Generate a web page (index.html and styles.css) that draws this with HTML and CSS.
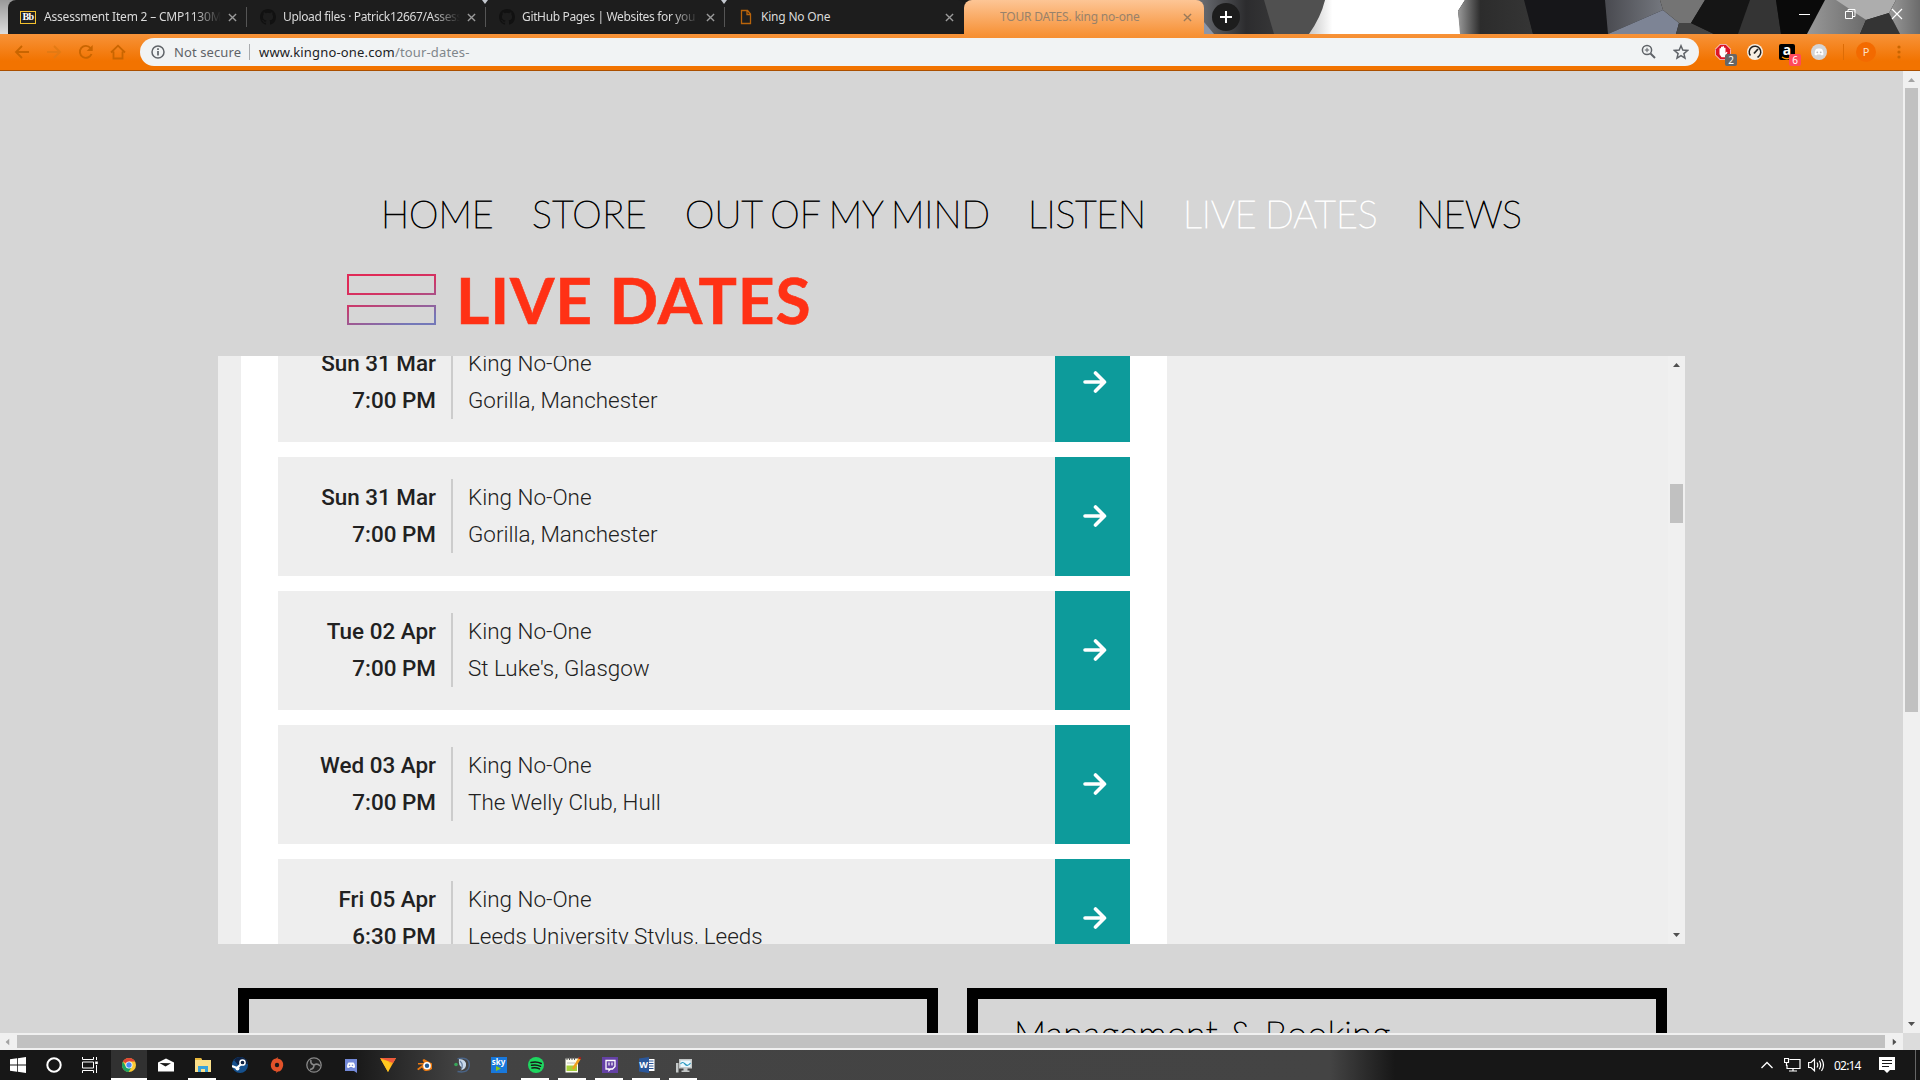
FILE: index.html
```html
<!DOCTYPE html>
<html lang="en">
<head>
<meta charset="utf-8">
<title>TOUR DATES. king no-one</title>
<link rel="stylesheet" href="styles.css">
</head>
<body>
<svg width="0" height="0" class="defs">
  <symbol id="close" viewBox="0 0 10 10"><path d="M1 1l8 8M9 1L1 9" stroke="currentColor" stroke-width="1.500"/></symbol>
  <symbol id="github" viewBox="0 0 16 16"><path d="M8 0C3.58 0 0 3.58 0 8c0 3.54 2.29 6.53 5.47 7.59.4.07.55-.17.55-.38v-1.49c-2.01.37-2.53-.49-2.69-.94-.09-.23-.48-.94-.82-1.13-.28-.15-.68-.52-.01-.53.63-.01 1.08.58 1.23.82.72 1.21 1.87.87 2.33.66.07-.52.28-.87.51-1.07-1.78-.2-3.64-.89-3.64-3.95 0-.87.31-1.59.82-2.15-.08-.2-.36-1.02.08-2.12 0 0 .67-.21 2.2.82a7.6 7.6 0 014 0c1.53-1.04 2.2-.82 2.2-.82.44 1.1.16 1.92.08 2.12.51.56.82 1.27.82 2.15 0 3.07-1.87 3.75-3.65 3.95.29.25.54.73.54 1.48v2.2c0 .21.15.46.55.38A8 8 0 0016 8c0-4.42-3.58-8-8-8z" fill="#111"/></symbol>
  <symbol id="arrow" viewBox="0 0 24 24"><path d="M2 12h19M12.500 3l9 9-9 9" fill="none" stroke="#fff" stroke-width="3.600" stroke-linecap="round" stroke-linejoin="round"/></symbol>
  <symbol id="tri" viewBox="0 0 7 4"><path d="M0 4L3.500 0 7 4z" fill="currentColor"/></symbol>
</svg>

<header class="tabstrip">
  <svg class="theme" width="1920" height="34" viewBox="0 0 1920 34">
    <defs>
      <linearGradient id="g1"><stop offset="0" stop-color="#777a80"/><stop offset=".4" stop-color="#2c2c2e"/><stop offset="1" stop-color="#484848"/></linearGradient>
      <linearGradient id="g2"><stop offset="0" stop-color="#c9c9c9"/><stop offset=".15" stop-color="#fff"/><stop offset="1" stop-color="#fff"/></linearGradient>
      <linearGradient id="g3"><stop offset="0" stop-color="#999"/><stop offset=".3" stop-color="#2c2c2c"/><stop offset="1" stop-color="#353535"/></linearGradient>
      <linearGradient id="g4"><stop offset="0" stop-color="#494a50"/><stop offset="1" stop-color="#74777e"/></linearGradient>
      <linearGradient id="g5"><stop offset="0" stop-color="#999"/><stop offset="1" stop-color="#6b6b6b"/></linearGradient>
      <linearGradient id="g6" x2="0" y2="1"><stop offset="0" stop-color="#999"/><stop offset="1" stop-color="#ddd"/></linearGradient>
    </defs>
    <path d="M0 0h1920v34H0z" fill="#1a1a1a"/>
    <path d="M0 0h26v27L8 34H0z" fill="url(#g6)"/>
    <path d="M1190 0h140v34h-140z" fill="url(#g1)"/>
    <path d="M1204 34V22l10 12z" fill="#8d96a8"/>
    <path d="M1264 0h60v34h-50z" fill="#505050"/>
    <path d="M1325 0h140l-7 11 3 23h-152q12-17 16-34z" fill="url(#g2)"/>
    <path d="M1465 0h60l8 34h-73l-2-23z" fill="url(#g3)"/>
    <path d="M1524 0h81l3 34h-75z" fill="#161619"/>
    <path d="M1605 0h55l3 10-55 24z" fill="url(#g4)"/>
    <path d="M1663 10l16 13-3 11h-68z" fill="#7d8495"/>
    <path d="M1660 0h45l-14 23h-12l-16-13z" fill="#747474"/>
    <path d="M1679 23h12l23 11h-38z" fill="#444"/>
    <path d="M1705 0h45l-12 34h-24l-23-11z" fill="#151515"/>
    <path d="M1750 0h26l5 34h-43z" fill="#343434"/>
    <path d="M1776 0h49l-18 34h-26z" fill="#0a0a0a"/>
    <path d="M1825 0h15l26 20-6 14h-53z" fill="url(#g5)"/>
    <path d="M1836 0h60l-7 13-23 7z" fill="#adadad"/>
    <path d="M1866 20l23-7 11 21h-40z" fill="#343434"/>
    <path d="M1896 0h24v34h-20l-11-21z" fill="url(#g5)"/>
  </svg>
  <div class="tabs">
    <div class="tab first">
      <span class="fav bb">Bb</span><span class="title faded">Assessment Item 2 – CMP1130M-</span><svg class="x"><use href="#close"/></svg>
    </div>
    <div class="tab">
      <svg class="fav"><use href="#github"/></svg><span class="title faded">Upload files · Patrick12667/Assess</span><svg class="x"><use href="#close"/></svg>
    </div>
    <div class="tab notch">
      <svg class="fav"><use href="#github"/></svg><span class="title faded">GitHub Pages | Websites for you a</span><svg class="x"><use href="#close"/></svg>
    </div>
    <div class="tab last notch">
      <svg class="fav" viewBox="0 0 16 16"><path d="M3.500 1.500h6l3 3.500v9.500h-9zM9 1.500V5.500h3.500" fill="none" stroke="#b9640b" stroke-width="1.300"/></svg><span class="title">King No One</span><svg class="x"><use href="#close"/></svg>
    </div>
    <div class="tab active">
      <span class="fav"></span><span class="title">TOUR DATES. king no-one</span><svg class="x"><use href="#close"/></svg>
    </div>
  </div>
  <div class="newtab"><svg width="14" height="14"><path d="M7 1v12M1 7h12" stroke="#fff" stroke-width="2"/></svg></div>
  <div class="winctl">
    <svg width="11" height="12"><path d="M0 6.500h11" stroke="#fff"/></svg>
    <svg width="11" height="12"><path d="M.5 3.500h7v7h-7zM3 3.500V1.500h7v7H7.500" fill="none" stroke="#fff"/></svg>
    <svg width="12" height="12"><path d="M1 1l10 10M11 1L1 11" stroke="#fff" stroke-width="1.200"/></svg>
  </div>
</header>

<div class="toolbar">
  <div class="navbtns">
    <svg viewBox="0 0 16 16"><path d="M15 8H2M8 2L2 8l6 6" fill="none" stroke="#c96500" stroke-width="1.800"/></svg>
    <svg viewBox="0 0 16 16"><path d="M1 8h13M8 2l6 6-6 6" fill="none" stroke="#e37a14" stroke-width="1.800"/></svg>
    <svg viewBox="0 0 16 16"><path d="M13.500 10A6 6 0 1 1 12.500 4" fill="none" stroke="#c96500" stroke-width="1.900"/><path d="M14.700 1v6h-6z" fill="#c96500"/></svg>
    <svg viewBox="0 0 16 16"><path d="M1 8.500L8 1.700l7 6.800M3.500 7.500v7h9v-7" fill="none" stroke="#c96500" stroke-width="1.800"/></svg>
  </div>
  <div class="omnibox">
    <svg width="14" height="14" viewBox="0 0 14 14"><circle cx="7" cy="7" r="6" fill="none" stroke="#5f6368" stroke-width="1.500"/><path d="M7 6v4.500M7 3.300v1.700" stroke="#5f6368" stroke-width="1.700"/></svg>
    <span class="secure">Not secure</span>
    <span class="url">www.kingno-one.com<i>/tour-dates-</i></span>
    <svg class="mag" width="15" height="15" viewBox="0 0 15 15"><g fill="none" stroke="#5f6368"><circle cx="6" cy="6" r="4.600" stroke-width="1.500"/><path d="M9.500 9.500l4.500 4.500" stroke-width="2"/><path d="M6 3.800v4.400M3.800 6h4.400"/></g></svg>
    <svg width="16" height="16" viewBox="0 0 16 16"><path d="M8 1.800l1.800 4.300 4.700.4-3.600 3.100 1.100 4.600L8 11.700l-4 2.500 1.100-4.600L1.500 6.500l4.700-.4z" fill="none" stroke="#5f6368" stroke-width="1.500"/></svg>
  </div>
  <div class="exts">
    <span class="ext"><svg viewBox="0 0 16 16"><path d="M5 0h6l5 5v6l-5 5H5l-5-5V5z" fill="#f3d6d6"/><path d="M5.300.8h5.400l4.500 4.500v5.400l-4.500 4.500H5.300L.8 10.700V5.300z" fill="#dd1626"/><path d="M4.500 7V4.500q.8-1 1.500 0V3q.8-1 1.500 0v-.5q.8-.8 1.500 0V4q.8-1 1.500 0v5l1-1.200 1 .5-2.500 5H6.500l-2-3z" fill="#fff"/></svg><b class="badge">2</b></span>
    <span class="ext"><svg viewBox="0 0 16 16"><circle cx="8" cy="8" r="8" fill="#f6eee4"/><circle cx="8" cy="8" r="5.800" fill="none" stroke="#222" stroke-width="1.500" stroke-dasharray="28 9" transform="rotate(142 8 8)"/><path d="M7 9.500L11 5" stroke="#222" stroke-width="1.800"/></svg></span>
    <span class="ext amz"><em>a</em><svg class="smile" viewBox="0 0 12 4"><path d="M1 1q5 3.500 10 0" fill="none" stroke="#f90" stroke-width="1.300"/></svg><b class="badge red">6</b></span>
    <span class="ext"><svg viewBox="0 0 16 16"><circle cx="8" cy="8" r="8" fill="#d4d4d4"/><path d="M3.500 10.500q0-4 1.500-5.500l2-.5h2l2 .5q1.500 1.500 1.500 5.500L11 11.500 9.500 10.500h-3L5 11.500z" fill="#fff"/><circle cx="6.300" cy="8.300" r=".9" fill="#bbb"/><circle cx="9.700" cy="8.300" r=".9" fill="#bbb"/></svg></span>
    <span class="vsep"></span>
    <span class="avatar">P</span>
    <svg class="dots" viewBox="0 0 4 14"><g fill="#c96500"><circle cx="2" cy="2" r="1.600"/><circle cx="2" cy="7" r="1.600"/><circle cx="2" cy="12" r="1.600"/></g></svg>
  </div>
</div>

<div class="viewport">
  <main class="page">
    <nav class="menu">
      <a class="m1">HOME</a><a class="m2">STORE</a><a class="m3">OUT OF MY MIND</a><a class="m4">LISTEN</a><a class="m5 current">LIVE DATES</a><a class="m6">NEWS</a>
    </nav>
    <div class="heading">
      <svg width="89" height="52" viewBox="0 0 89 52"><defs><linearGradient id="lg" gradientUnits="userSpaceOnUse" x1="40" y1="0" x2="55" y2="52"><stop offset="0" stop-color="#e02a57"/><stop offset=".35" stop-color="#d03566"/><stop offset="1" stop-color="#7478b8"/></linearGradient></defs><path d="M1 1h87v19H1zM1 32h87v18H1z" fill="none" stroke="url(#lg)" stroke-width="2"/></svg>
      <h1>LIVE DATES</h1>
    </div>
    <section class="widget">
      <div class="sheet">
        <article class="gig"><div class="when">Sun 31 Mar<br>7:00 PM</div><div class="what">King No-One<br>Gorilla, Manchester</div><div class="go"><svg><use href="#arrow"/></svg></div></article>
        <article class="gig"><div class="when">Sun 31 Mar<br>7:00 PM</div><div class="what">King No-One<br>Gorilla, Manchester</div><div class="go"><svg><use href="#arrow"/></svg></div></article>
        <article class="gig"><div class="when">Tue 02 Apr<br>7:00 PM</div><div class="what">King No-One<br>St Luke's, Glasgow</div><div class="go"><svg><use href="#arrow"/></svg></div></article>
        <article class="gig"><div class="when">Wed 03 Apr<br>7:00 PM</div><div class="what">King No-One<br>The Welly Club, Hull</div><div class="go"><svg><use href="#arrow"/></svg></div></article>
        <article class="gig"><div class="when">Fri 05 Apr<br>6:30 PM</div><div class="what">King No-One<br>Leeds University Stylus, Leeds</div><div class="go"><svg><use href="#arrow"/></svg></div></article>
      </div>
      <div class="vbar inner"><svg class="tri"><use href="#tri"/></svg><div class="thumb"></div><svg class="tri down"><use href="#tri"/></svg></div>
    </section>
    <div class="boxes">
      <div class="box"></div>
      <div class="box"><h2>Management &amp; Booking</h2></div>
    </div>
  </main>
  <div class="vbar outer"><svg class="tri"><use href="#tri"/></svg><div class="thumb"></div><svg class="tri down"><use href="#tri"/></svg></div>
</div>
<div class="hbar"><svg class="tri left"><use href="#tri"/></svg><div class="thumb"></div><svg class="tri right"><use href="#tri"/></svg><span class="corner"></span></div>

<footer class="taskbar">
  <div class="apps">
    <span class="app"><svg viewBox="0 0 16 16"><path d="M0 2.300L7 1.300V7.600H0zM7.800 1.200L16 0v7.600H7.800zM0 8.400h7v6.300l-7-1zM7.800 8.400H16V16l-8.200-1.200z" fill="#fff"/></svg></span>
    <span class="app"><svg viewBox="0 0 16 16"><circle cx="8" cy="8" r="6.700" fill="none" stroke="#fff" stroke-width="2"/></svg></span>
    <span class="app wide"><svg viewBox="0 0 16 16"><path d="M.5 0v2.500h11V0M.5 16v-2.500h11V16M.5 5h11v6H.5zM14.500 0v3M14.500 8v8" fill="none" stroke="#fff"/><path d="M13.200 4.500h2.600v2.600h-2.600z" fill="#fff"/></svg></span>
    <span class="app hot run"><svg viewBox="0 0 16 16"><circle cx="8" cy="8" r="7" fill="#fcc934"/><path d="M8 8L1.900 4.500A7 7 0 0 1 14.100 4.500H8z" fill="#e04436"/><path d="M1.900 4.500A7 7 0 0 0 7.500 15L11 9.700 8 8 5 9.700z" fill="#1da462"/><circle cx="8" cy="8" r="3.500" fill="#fff"/><circle cx="8" cy="8" r="2.700" fill="#4c8bf5"/></svg></span>
    <span class="app"><svg viewBox="0 0 16 16"><path d="M0 5.500L8 1.500l8 4V14.500H0z" fill="#fff"/><path d="M1.500 6l11.500.3L7.500 9.500z" fill="#181818"/></svg></span>
    <span class="app run"><svg viewBox="0 0 16 16"><path d="M0 1h6l1 2h9v12H0z" fill="#fbe08b"/><path d="M0 1h6l1 2H0z" fill="#e8b83c"/><path d="M3 15V9h10v6h-3v-3H6v3z" fill="#3aa3dc"/></svg></span>
    <span class="app"><svg viewBox="0 0 16 16"><circle cx="8" cy="8" r="8" fill="#15508d"/><path d="M2 3a8 8 0 0 1 14 4L6 8z" fill="#0c2144"/><circle cx="10.500" cy="5.500" r="2.600" fill="none" stroke="#fff" stroke-width="1.500"/><path d="M0 9l5 2 4-4" fill="none" stroke="#fff" stroke-width="2.200"/><circle cx="5.500" cy="11.500" r="2" fill="#fff"/></svg></span>
    <span class="app"><svg viewBox="0 0 16 16"><path d="M9 0l-.5 1.500Q14.500 2.500 14.200 8.500 13 14.500 9 14.500l-2 1.500.5-1.500Q1.500 13.500 1.800 7.500 3 1.500 7 1.500z" fill="#e1522a"/><circle cx="8" cy="8" r="2.200" fill="#181818"/></svg></span>
    <span class="app"><svg viewBox="0 0 16 16"><circle cx="8" cy="8" r="7.200" fill="#222" stroke="#888" stroke-width="1.300"/><path d="M8 8Q4 7 5 3M8 8q3.500-2 6 1M8 8q0 4-4 4.500" fill="none" stroke="#888" stroke-width="1.600"/></svg></span>
    <span class="app"><svg viewBox="0 0 16 16"><path d="M2 2h12v14l-3-2H2z" fill="#7389d8"/><path d="M4 10.500q0-4 1.500-5h5Q12 6.500 12 10.500l-2 .5-.8-1H6.800L6 11z" fill="#fff"/><circle cx="6.500" cy="8.300" r=".8" fill="#7389d8"/><circle cx="9.500" cy="8.300" r=".8" fill="#7389d8"/></svg></span>
    <span class="app"><svg viewBox="0 0 16 16"><path d="M0 1h16L8 15z" fill="#fdae1c"/><path d="M0 1h16l-3 5z" fill="#ee5a3c"/><path d="M1 2.500l7 1.800 3 4L8 15z" fill="#ffc820"/></svg></span>
    <span class="app"><svg viewBox="0 0 16 16"><path d="M0 12l6-4.500H1V6h6L5.500 3 7 2l8 4.500V12q-4 3-8 1.500L5 10.500l-3.500 2.700z" fill="#ea7a12"/><circle cx="10" cy="8.800" r="3.800" fill="#fff"/><circle cx="10" cy="8.800" r="2.200" fill="#235b91"/></svg></span>
    <span class="app"><svg viewBox="0 0 16 16"><path d="M3.500 1.800Q15.300-.5 15.300 8T3.500 14.500" fill="none" stroke="#4a6487" stroke-width="1.500"/><path d="M5 2q7.500 0 7 6.500-.5 4-5.500 5 1.500-1 2-3Q4 9 5 2z" fill="#c8d8ea"/><path d="M6 4q4 4 1 8" fill="none" stroke="#6a83a5" stroke-width="1.200"/><circle cx="2" cy="7.500" r="1.800" fill="#38a558"/></svg></span>
    <span class="app sky"><i>sky</i><svg class="play" viewBox="0 0 6 6"><path d="M0 0l6 3-6 3z" fill="#83c31f"/></svg></span>
    <span class="app run"><svg viewBox="0 0 16 16"><circle cx="8" cy="8" r="8" fill="#1ed760"/><path d="M3 5.500q5.500-1.500 10.300 1M3.500 8.300q5-1.200 9 1M4 11q4-1 7.500.9" fill="none" stroke="#181818" stroke-width="1.500" stroke-linecap="round"/></svg></span>
    <span class="app run"><svg viewBox="0 0 16 16"><path d="M.5 1.500h12.500v14H.5z" fill="#fdfdf0"/><path d="M1.500 8.500H12V14H1.500z" fill="#a6cf3a"/><path d="M2 6h8" stroke="#bbb"/><path d="M2 0v3M4.500 0v3M7 0v3M9.500 0v3" stroke="#555"/><path d="M15 1L8 12" stroke="#f0a01e" stroke-width="2.500"/><path d="M15.500 0l-1 2" stroke="#a02020" stroke-width="2.500"/></svg></span>
    <span class="app run"><svg viewBox="0 0 16 16"><path d="M0 0h16v16H0z" fill="#6441a5"/><path d="M4 3.500h9v6L10.500 12h-2L7 13.500V12H4z" fill="none" stroke="#fff" stroke-width="1.300"/><path d="M7 5.500v3M10 5.500v3" stroke="#fff" stroke-width="1.200"/></svg></span>
    <span class="app run word"><svg viewBox="0 0 16 16"><path d="M8 2h7.500v12H8z" fill="#fff"/><path d="M10 4h4.500M10 6.500h4.500M10 9h4.500M10 11.500h4.500" stroke="#2b579a"/><path d="M0 1.500L10 0v16L0 14.500z" fill="#2b579a"/></svg><i>W</i></span>
    <span class="app run"><svg viewBox="0 0 16 16"><path d="M3 2h13v9.500H3zM7.500 11.500h4v2h2V15h-8v-1.500h2zM0 6h2.500v9.500H0z" fill="#c4c8c8"/><path d="M4.500 3.500h10V10h-10z" fill="#eaf8fd"/><path d="M4.500 7q2-3 4.500 0t5.500-1" fill="none" stroke="#2596be" stroke-width="1.200"/></svg></span>
  </div>
  <div class="tray">
    <svg width="12" height="8" viewBox="0 0 12 8"><path d="M.5 7L6 1.500 11.500 7" fill="none" stroke="#fff" stroke-width="1.300"/></svg>
    <svg class="net" width="17" height="14" viewBox="0 0 17 14"><path d="M5.500 1.500H16V10.500H3V7M9 10.500V13M5 13h8M.5.500h4v4h-4zM2.500 4.500V8" fill="none" stroke="#fff" stroke-width="1.200"/></svg>
    <svg class="vol" width="17" height="14" viewBox="0 0 17 14"><path d="M.6 4.500H3L6.500 1.200v11.600L3 9.500H.6zM9 4.500q1.600 2.500 0 5M11.300 2.800q2.700 4.200 0 8.400M13.500 1q4 6 0 12" fill="none" stroke="#fff" stroke-width="1.200"/></svg>
    <span class="clock">02:14</span>
    <svg class="note" width="16" height="16" viewBox="0 0 16 16"><path d="M0 0h16v13H11L8 16 5 13H0z" fill="#fff"/><path d="M3 3.500h10M3 6.500h10M3 9.500h7" stroke="#181818" stroke-width="1.200"/></svg>
    <span class="peek"></span>
  </div>
</footer>
</body>
</html>
```

FILE: styles.css
```css
* { box-sizing: border-box; }
body { margin: 0; width: 1920px; height: 1080px; overflow: hidden; display: flex; flex-direction: column; background: #d6d6d6; font-family: "Noto Sans", "Open Sans", sans-serif; }
svg { display: block; flex: none; }
.defs { position: absolute; }

.tabstrip { position: relative; height: 34px; flex: none; display: flex; padding-left: 8px; }
.theme { position: absolute; left: 0; top: 0; z-index: -1; }
.tabs { display: flex; }
.tab { width: 239px; height: 34px; background: #1d1d1d; display: flex; align-items: center; padding: 0 10px 0 13px; color: #dadada; position: relative; }
.tab:not(.last):not(.active)::after { content: ""; position: absolute; right: 0; top: 7px; width: 1px; height: 20px; background: #555; }
.notch::before { content: ""; position: absolute; left: -4px; top: 0; border: 3.500px solid transparent; border-top: 4px solid #c4c8d0; border-bottom: 0; }
.first { border-top-left-radius: 8px; padding-left: 12px; }
.last { border-bottom-right-radius: 8px; border-top-right-radius: 6px; }
.active { width: 240px; padding-right: 12px; background: linear-gradient(#fdc595, #f79339); border-radius: 8px 8px 0 0; color: #98826b; }
.fav { width: 16px; height: 16px; margin-right: 7px; flex: none; }
.bb { height: 13px; background: #222; border: 1px solid #f4c12e; color: #fff; font: bold 10px/10px "Liberation Serif", serif; text-align: center; letter-spacing: -.5px; margin-right: 8px; }
.title { flex: 1; font-size: 12px; line-height: 16px; white-space: nowrap; overflow: hidden; letter-spacing: -.2px; }
.faded { letter-spacing: -.35px; -webkit-mask-image: linear-gradient(90deg, #000 150px, transparent 177px); mask-image: linear-gradient(90deg, #000 150px, transparent 177px); }
.first .faded { letter-spacing: -.2px; }
.x { width: 9px; height: 9px; color: #9b9b9b; margin-left: 6px; }
.active .x { color: #9a7a5a; }
.newtab { width: 28px; height: 28px; border-radius: 50%; background: #1d1d1d; margin: 3px 0 0 8px; display: grid; place-items: center; }
.winctl { margin-left: auto; padding: 8px 17px 0 0; display: flex; gap: 35px; }

.toolbar { height: 37px; flex: none; background: linear-gradient(#f79339, #f27300 75%); border-bottom: 1px solid #aa4f00; display: flex; align-items: center; padding: 0 0 1px 14px; }
.navbtns { display: flex; gap: 16px; width: 126px; }
.navbtns svg { width: 16px; height: 16px; }
.omnibox { width: 1559px; height: 28px; background: #f1f3f4; border-radius: 14px; display: flex; align-items: center; padding: 0 10px 0 11px; font-size: 13px; color: #5f6368; }
.secure { margin-left: 9px; width: 76px; border-right: 1px solid #a9abae; line-height: 16px; letter-spacing: .1px; }
.url { margin-left: 9px; color: #202124; flex: 1; letter-spacing: .16px; }
.url i { font-style: normal; color: #80868b; }
.mag { margin-right: 17px; }
.exts { display: flex; align-items: center; padding-left: 16px; }
.ext { position: relative; width: 16px; height: 16px; margin-right: 16px; }
.ext > svg:first-child { width: 16px; height: 16px; }
.badge { position: absolute; left: 10px; top: 10px; width: 12px; height: 12px; border-radius: 2px; background: #666; color: #fff; font: 10px/12px "Noto Sans", sans-serif; text-align: center; }
.red { background: #ff4a5a; }
.amz { background: #000; border-radius: 2px; }
.amz em { display: block; font: bold 14px/12px "Noto Sans", sans-serif; color: #fff; text-align: center; }
.smile { position: absolute; left: 2px; top: 12px; width: 12px; }
.vsep { width: 1px; height: 16px; background: #dd6c05; }
.avatar { width: 20px; height: 20px; border-radius: 50%; background: #f36a00; color: #fce0c8; font-size: 11px; line-height: 20px; text-align: center; margin: 0 21px 0 12px; }
.dots { width: 4px; height: 14px; }

.viewport { height: 962px; flex: none; display: flex; }
.page { width: 1903px; height: 962px; overflow: hidden; padding-top: 118px; }
.menu { display: flex; height: 50px; padding-left: 381px; font: 100 37.500px/50px Lato, sans-serif; color: #000; white-space: nowrap; -webkit-text-stroke: .9px; word-spacing: -2px; }
.menu a { width: 151px; }
.menu .m2 { width: 153px; letter-spacing: .5px; }
.menu .m3 { width: 343px; }
.menu .m4 { width: 155px; letter-spacing: -.2px; }
.menu .m5 { width: 233px; }
.menu .m6 { letter-spacing: -.5px; }
.menu .current { color: #fff; }
.heading { display: flex; align-items: flex-start; padding: 35px 0 0 347px; height: 117px; }
h1 { margin: -12px 0 0 20px; font: bold 64px/76px Lato, sans-serif; letter-spacing: .9px; color: #ff3115; white-space: nowrap; -webkit-text-stroke: .6px; }
.widget { margin-left: 218px; width: 1467px; height: 588px; background: #eee; overflow: hidden; display: flex; justify-content: space-between; }
.sheet { width: 926px; margin-left: 23px; background: #fff; padding: 0 37px; display: flex; flex-direction: column; gap: 15px; margin-top: -33px; height: 700px; }
.gig { height: 119px; flex: none; background: #eee; display: flex; align-items: flex-start; padding-top: 22px; font: 300 22.450px/37px Roboto, sans-serif; color: #212121; }
.when { width: 175px; height: 74px; text-align: right; padding-right: 15px; border-right: 2px solid #ccc; font-weight: 500; }
.what { flex: 1; height: 74px; padding-left: 15px; }
.go { width: 75px; height: 119px; margin-top: -22px; background: #0d9b9b; display: grid; place-items: center; padding: 0 0 2px 4px; }
.go svg { width: 24px; height: 24px; }

.vbar { width: 17px; background: #f0f0f0; display: flex; flex-direction: column; align-items: center; color: #505050; }
.tri { width: 7px; height: 4px; }
.vbar .down { transform: rotate(180deg); margin-top: auto; }
.vbar .thumb, .hbar .thumb { background: #c1c1c1; }
.inner { padding: 7px 0; }
.inner .thumb { width: 13px; height: 39px; margin-top: 117px; }
.outer { padding: 7px 0; }
.outer .tri:first-child, .left { color: #a3a3a3; }
.outer .thumb { width: 13px; height: 624px; margin-top: 6px; }
.hbar { height: 17px; flex: none; background: #f0f0f0; display: flex; align-items: center; padding-left: 4px; color: #505050; }
.hbar .thumb { width: 1868px; height: 13px; margin: 0 6px 0 6px; }
.left { transform: rotate(-90deg); }
.right { transform: rotate(90deg); }
.corner { margin-left: auto; width: 17px; height: 17px; background: #dcdcdc; }

.boxes { display: flex; gap: 29px; padding: 44px 0 0 238px; }
.box { width: 700px; height: 140px; border: 11px solid #000; flex: none; }
h2 { margin: 9px 0 0 36px; font: 100 36px/50px Lato, sans-serif; letter-spacing: .45px; color: #000; -webkit-text-stroke: 1px; white-space: nowrap; }

.taskbar { height: 30px; flex: none; display: flex; background: linear-gradient(90deg, #171717 350px, #434343 460px, #444 1330px, #171717 1395px); }
.apps { display: flex; }
.app { position: relative; width: 37px; height: 30px; display: grid; place-items: center; }
.app:first-child, .app:nth-child(2) { width: 36px; }
.app.wide { width: 39px; padding-right: 3px; }
.app > svg { width: 16px; height: 16px; }
.run::after { content: ""; position: absolute; left: 4px; right: 5px; bottom: 0; height: 2px; background: #fff; }
.app.hot { background: #313131; width: 36px; }
.hot::after { left: 0; right: 0; }
.sky i { grid-area: 1/1; width: 16px; height: 16px; background: #1878dc; color: #fff; font: bold 8px/9px "Noto Sans", sans-serif; text-align: center; }
.app.sky .play { grid-area: 1/1; width: 5px; height: 5px; margin-top: 7px; }
.word svg, .word i { grid-area: 1/1; }
.word i { font: bold 9px/16px "Noto Sans", sans-serif; color: #fff; margin-right: 6px; }
.tray { margin-left: auto; display: flex; align-items: center; color: #fff; }
.tray > :first-child { margin-right: 1px; }
.net { margin-left: 10px; }
.vol { margin-left: 7px; }
.clock { font-size: 12px; margin-left: 9px; width: 28px; letter-spacing: -.8px; }
.note { margin-left: 17px; }
.peek { width: 1px; height: 30px; background: #666; margin: 0 4px 0 20px; }
```
